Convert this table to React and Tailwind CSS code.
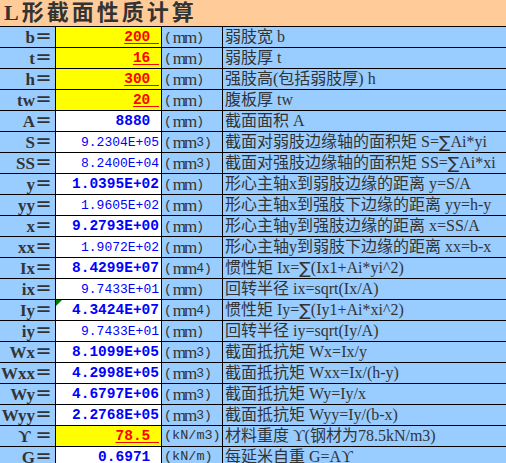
import React from "react";

const ROWS = [
  { k: "b", v: "200 ", u: "mm", d: "弱肢宽 b", kind: "input" },
  { k: "t", v: "16 ", u: "mm", d: "弱肢厚 t", kind: "input" },
  { k: "h", v: "300 ", u: "mm", d: "强肢高(包括弱肢厚) h", kind: "input" },
  { k: "tw", v: "20 ", u: "mm", d: "腹板厚 tw", kind: "input" },
  { k: "A", v: "8880 ", u: "mm", d: "截面面积 A", kind: "bold" },
  { k: "S", v: "9.2304E+05", u: "mm3", d: "截面对弱肢边缘轴的面积矩 S=∑Ai*yi", kind: "plain" },
  { k: "SS", v: "8.2400E+04", u: "mm3", d: "截面对强肢边缘轴的面积矩 SS=∑Ai*xi", kind: "plain" },
  { k: "y", v: "1.0395E+02", u: "mm", d: "形心主轴x到弱肢边缘的距离 y=S/A", kind: "bold" },
  { k: "yy", v: "1.9605E+02", u: "mm", d: "形心主轴x到强肢下边缘的距离 yy=h-y", kind: "plain" },
  { k: "x", v: "9.2793E+00", u: "mm", d: "形心主轴y到强肢边缘的距离 x=SS/A", kind: "bold" },
  { k: "xx", v: "1.9072E+02", u: "mm", d: "形心主轴y到弱肢下边缘的距离 xx=b-x", kind: "plain" },
  { k: "Ix", v: "8.4299E+07", u: "mm4", d: "惯性矩 Ix=∑(Ix1+Ai*yi^2)", kind: "bold" },
  { k: "ix", v: "9.7433E+01", u: "mm", d: "回转半径 ix=sqrt(Ix/A)", kind: "plain" },
  { k: "Iy", v: "4.3424E+07", u: "mm4", d: "惯性矩 Iy=∑(Iy1+Ai*xi^2)", kind: "bold", flag: true },
  { k: "iy", v: "9.7433E+01", u: "mm", d: "回转半径 iy=sqrt(Iy/A)", kind: "plain" },
  { k: "Wx", v: "8.1099E+05", u: "mm3", d: "截面抵抗矩 Wx=Ix/y", kind: "bold" },
  { k: "Wxx", v: "4.2998E+05", u: "mm3", d: "截面抵抗矩 Wxx=Ix/(h-y)", kind: "bold" },
  { k: "Wy", v: "4.6797E+06", u: "mm3", d: "截面抵抗矩 Wy=Iy/x", kind: "bold" },
  { k: "Wyy", v: "2.2768E+05", u: "mm3", d: "截面抵抗矩 Wyy=Iy/(b-x)", kind: "bold" },
  { k: "ϒ ", v: "78.5 ", u: "(kN/m3)", d: "材料重度 ϒ(钢材为78.5kN/m3)", kind: "input" },
  { k: "G", v: "0.6971 ", u: "(kN/m)", d: "每延米自重 G=Aϒ", kind: "bold" },
];

const valueClass = {
  input: "bg-[#ffff00] text-[#ff0000] font-bold text-[14.5px] underline underline-offset-[2px]",
  bold: "bg-white text-[#0000ff] font-bold text-[14.5px]",
  plain: "bg-white text-[#0000ff] text-[13px]",
};

// "mm" units are drawn as a squeezed serif pair, the way the sheet's ㎜ glyph looks
const Unit = ({ u }) => {
  if (u.startsWith("(")) return <span className="text-[13.5px]">{u}</span>;
  return (
    <>
      (
      <span className="px-[1px] tracking-[-2px] text-[17px] font-['Liberation_Serif',serif]">mm</span>
      {u.slice(2)})
    </>
  );
};

// the summation sign is a tall, wide glyph in the sheet
const Desc = ({ d }) =>
  d.split("∑").map((part, i) => (
    <React.Fragment key={i}>
      {i > 0 && <span className="font-['DejaVu_Sans',sans-serif] text-[17px]">∑</span>}
      {part}
    </React.Fragment>
  ));

const Row = ({ k, v, u, d, kind, flag }) => (
  <>
    <div className="h-[20px] bg-[#99ccff] flex items-center justify-end pr-[3px] text-[17px] font-bold text-[#333333] font-['Liberation_Serif','Noto_Sans_CJK_SC',serif] leading-none">
      {k}＝
    </div>
    <div
      className={`relative h-[20px] flex items-center justify-end pr-[2px] whitespace-pre leading-none font-['Liberation_Mono','Noto_Sans_CJK_SC',monospace] ${valueClass[kind]}`}
    >
      {flag && (
        <svg className="absolute left-0 top-0" width="6" height="6" viewBox="0 0 6 6">
          <polygon points="0,0 6,0 0,6" fill="#008000" />
        </svg>
      )}
      {v}
    </div>
    <div className="h-[20px] bg-[#99ccff] flex items-center pl-[2px] text-[13px] text-[#333333] font-['Liberation_Mono','Noto_Sans_CJK_SC',monospace] leading-none whitespace-pre">
      <Unit u={u} />
    </div>
    <div className="h-[20px] bg-[#99ccff] flex items-center pl-[2px] text-[16px] text-[#333333] font-['Liberation_Serif','Noto_Sans_CJK_SC',serif] leading-none whitespace-pre overflow-hidden">
      <Desc d={d} />
    </div>
  </>
);

export default function App() {
  return (
    <div className="w-[506px] h-[463px] overflow-hidden bg-white">
      <div className="grid grid-cols-[55px_105px_60px_283px] gap-px bg-black">
        <div className="col-span-4 h-[26px] bg-[#ffcc99] flex items-center pl-[4px] text-[22px] font-bold tracking-[3px] text-[#333333] font-['Liberation_Serif','Noto_Sans_CJK_SC',serif] leading-none">
          L形截面性质计算
        </div>
        {ROWS.map((r) => (
          <Row key={r.k} {...r} />
        ))}
      </div>
    </div>
  );
}
